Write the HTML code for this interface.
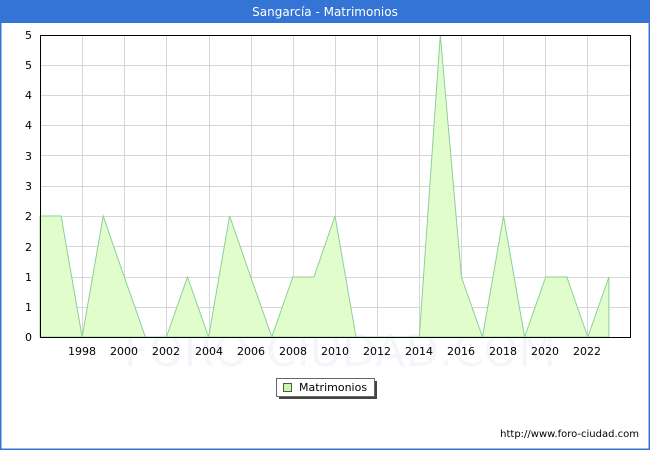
<!DOCTYPE html>
<html><head><meta charset="utf-8"><style>
body{margin:0;width:650px;height:450px;overflow:hidden;font-family:"DejaVu Sans","Liberation Sans",sans-serif;}
</style></head><body>
<svg width="650" height="450" xmlns="http://www.w3.org/2000/svg" font-family="DejaVu Sans, Liberation Sans, sans-serif">
<rect x="0" y="0" width="650" height="450" fill="#3474d4"/>
<rect x="1.5" y="23" width="647" height="425.5" fill="#fff"/>
<text x="325" y="16" fill="#fff" font-size="12" text-anchor="middle">Sangarcía - Matrimonios</text>
<text x="340" y="366" fill="#f5f6fb" font-size="44" text-anchor="middle">FORO-CIUDAD.COM</text>
<g stroke="#d6d6d6" stroke-width="1">
<line x1="40" x2="630" y1="65.5" y2="65.5"/><line x1="40" x2="630" y1="95.5" y2="95.5"/><line x1="40" x2="630" y1="125.5" y2="125.5"/><line x1="40" x2="630" y1="155.5" y2="155.5"/><line x1="40" x2="630" y1="186.5" y2="186.5"/><line x1="40" x2="630" y1="216.5" y2="216.5"/><line x1="40" x2="630" y1="246.5" y2="246.5"/><line x1="40" x2="630" y1="277.5" y2="277.5"/><line x1="40" x2="630" y1="307.5" y2="307.5"/>
<line x1="82.5" x2="82.5" y1="35" y2="337"/><line x1="124.5" x2="124.5" y1="35" y2="337"/><line x1="166.5" x2="166.5" y1="35" y2="337"/><line x1="209.5" x2="209.5" y1="35" y2="337"/><line x1="251.5" x2="251.5" y1="35" y2="337"/><line x1="293.5" x2="293.5" y1="35" y2="337"/><line x1="335.5" x2="335.5" y1="35" y2="337"/><line x1="377.5" x2="377.5" y1="35" y2="337"/><line x1="419.5" x2="419.5" y1="35" y2="337"/><line x1="461.5" x2="461.5" y1="35" y2="337"/><line x1="503.5" x2="503.5" y1="35" y2="337"/><line x1="545.5" x2="545.5" y1="35" y2="337"/><line x1="587.5" x2="587.5" y1="35" y2="337"/>
</g>
<polygon fill="#e2fdcc" stroke="#8ccf9a" stroke-width="1" points="40,337 40,216 61.1,216 82.1,337 103.2,216 124.3,277 145.4,337 166.4,337 187.5,277 208.6,337 229.6,216 250.7,277 271.8,337 292.8,277 313.9,277 335,216 356,337 377.1,337 398.2,337 419.3,337 440.3,35 461.4,277 482.5,337 503.5,216 524.6,337 545.7,277 566.8,277 587.8,337 608.9,277 608.9,337"/>
<rect x="40.5" y="35.5" width="590" height="302" fill="none" stroke="#000" stroke-width="1"/>
<g font-size="11" fill="#000" text-anchor="end">
<text x="32" y="39">5</text><text x="32" y="69">5</text><text x="32" y="99">4</text><text x="32" y="129">4</text><text x="32" y="160">3</text><text x="32" y="190">3</text><text x="32" y="220">2</text><text x="32" y="251">2</text><text x="32" y="281">1</text><text x="32" y="311">1</text><text x="32" y="341">0</text>
</g>
<g font-size="11" fill="#000" text-anchor="middle">
<text x="82" y="355">1998</text><text x="124" y="355">2000</text><text x="166" y="355">2002</text><text x="209" y="355">2004</text><text x="251" y="355">2006</text><text x="293" y="355">2008</text><text x="335" y="355">2010</text><text x="377" y="355">2012</text><text x="419" y="355">2014</text><text x="461" y="355">2016</text><text x="503" y="355">2018</text><text x="545" y="355">2020</text><text x="587" y="355">2022</text>
</g>
<rect x="279" y="381" width="98" height="18" fill="#444"/>
<rect x="276.5" y="378.5" width="98" height="18" fill="#fff" stroke="#666"/>
<rect x="283.5" y="383.5" width="8" height="8" fill="#ccf5a8" stroke="#555"/>
<text x="299" y="391" font-size="11" fill="#000">Matrimonios</text>
<text x="639" y="437" font-size="10" fill="#000" text-anchor="end">http://www.foro-ciudad.com</text>
</svg>
</body></html>
